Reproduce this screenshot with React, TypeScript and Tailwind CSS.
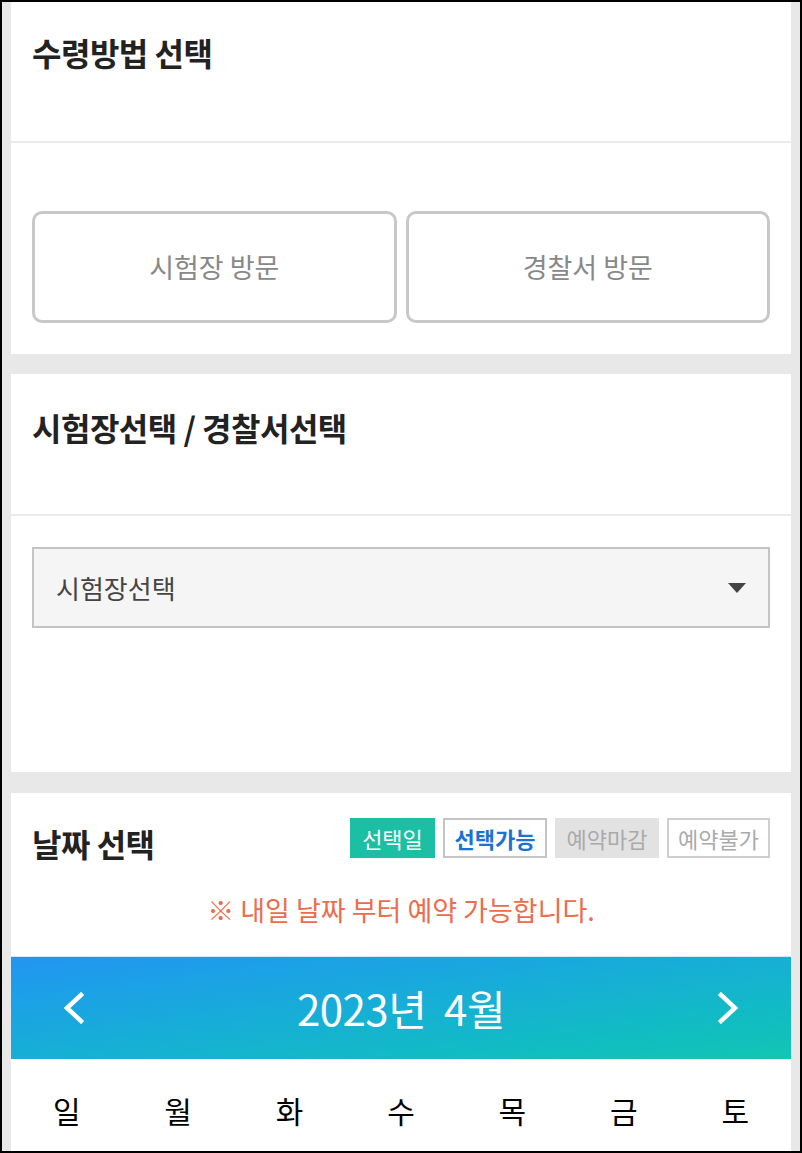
import React from 'react'

const font = { fontFamily: '"Noto Sans CJK KR", "Noto Sans", sans-serif' }

const weekdays = ['일', '월', '화', '수', '목', '금', '토']

function Chevron({ dir }: { dir: 'left' | 'right' }) {
  // 좌우 화살표
  const pts = dir === 'left' ? '18,3 4,16 18,29' : '4,3 18,16 4,29'
  return (
    <svg width="22" height="32" viewBox="0 0 22 32" fill="none">
      <polyline points={pts} stroke="white" strokeWidth="4.5" strokeLinecap="square" strokeLinejoin="miter" />
    </svg>
  )
}

export default function App() {
  return (
    <div
      className="w-[802px] h-[1153px] border-2 border-black bg-[#e8e8e8] px-[9px] overflow-hidden text-[#222]"
      style={font}
    >
      {/* 수령방법 선택 */}
      <section className="bg-white">
        <div className="h-[141px] border-b-2 border-[#ebebeb] pl-[21px] pt-[30px]">
          <h2 className="text-[32px] leading-[40px] font-bold tracking-[-0.5px]">수령방법 선택</h2>
        </div>
        <div className="grid grid-cols-2 gap-[9px] px-[21px] pt-[68px] pb-[31px]">
          <button className="h-[112px] rounded-[10px] border-[3px] border-[#c8c8c8] text-[27px] text-[#888]">
            시험장 방문
          </button>
          <button className="h-[112px] rounded-[10px] border-[3px] border-[#c8c8c8] text-[27px] text-[#888]">
            경찰서 방문
          </button>
        </div>
      </section>

      {/* 시험장선택 / 경찰서선택 */}
      <section className="bg-white mt-[20px]">
        <div className="h-[142px] border-b-2 border-[#ebebeb] pl-[21px] pt-[33px]">
          <h2 className="text-[32px] leading-[40px] font-bold tracking-[-0.5px]">시험장선택 / 경찰서선택</h2>
        </div>
        <div className="px-[21px] pt-[31px] pb-[144px]">
          <div className="h-[81px] border-2 border-[#c4c4c4] bg-[#f5f5f5] flex items-center justify-between pl-[22px] pr-[22px]">
            <span className="text-[26px] text-[#444]">시험장선택</span>
            <svg width="18" height="10" viewBox="0 0 18 10">
              <polygon points="0,0 18,0 9,10" fill="#444" />
            </svg>
          </div>
        </div>
      </section>

      {/* 날짜 선택 */}
      <section className="bg-white mt-[21px]">
        <div className="flex items-start justify-between px-[21px] pt-[25px]">
          <h2 className="text-[32px] leading-[40px] font-bold tracking-[-0.5px] mt-[5px]">날짜 선택</h2>
          <div className="flex items-center gap-[8px] text-[22px]">
            <span className="w-[85px] h-[40px] flex items-center justify-center bg-[#1bbfa3] text-white">선택일</span>
            <span className="w-[104px] h-[40px] flex items-center justify-center border-2 border-[#c4c4c4] text-[#1a73d1] font-bold">
              선택가능
            </span>
            <span className="w-[104px] h-[40px] flex items-center justify-center bg-[#e2e2e2] text-[#aaa]">예약마감</span>
            <span className="w-[103px] h-[40px] flex items-center justify-center border-2 border-[#cfcfcf] text-[#aaa]">
              예약불가
            </span>
          </div>
        </div>
        <p className="text-center text-[27px] leading-[32px] text-[#ec6c4c] mt-[31px] mb-[30px]">
          ※ 내일 날짜 부터 예약 가능합니다.
        </p>
        <div className="border-t border-[#d6e9f2]">
          <div className="h-[102px] bg-linear-to-br from-[#2295f2] via-[#17afd5] to-[#12c6b2] flex items-center justify-between px-[52px]">
            <Chevron dir="left" />
            <span className="text-white text-[42px] leading-none tracking-[-0.5px]">2023년&nbsp;&nbsp;4월</span>
            <Chevron dir="right" />
          </div>
        </div>
        <div className="grid grid-cols-7 pt-[31px] pb-[40px]">
          {weekdays.map(d => (
            <div key={d} className="text-center text-[30px] leading-[40px] text-black">
              {d}
            </div>
          ))}
        </div>
      </section>
    </div>
  )
}
